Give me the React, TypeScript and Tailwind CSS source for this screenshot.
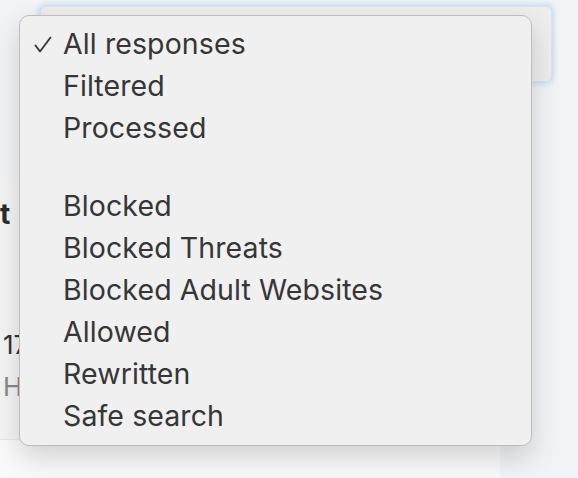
const groups: string[][] = [
  ['All responses', 'Filtered', 'Processed'],
  ['Blocked', 'Blocked Threats', 'Blocked Adult Websites', 'Allowed', 'Rewritten', 'Safe search'],
]

const selected = 'All responses'

function Check() {
  return (
    <svg className="absolute left-[14px] top-[13px] w-[18px] h-[18px]" viewBox="0 0 18 18" fill="none">
      <path d="M1.5 9.5 L6 15.5 L16.5 1.5" stroke="#3a3a3a" strokeWidth="1.9" strokeLinecap="round" strokeLinejoin="round" />
    </svg>
  )
}

function DropdownMenu() {
  return (
    <div className="absolute left-[19px] top-[15px] w-[513px] h-[431px] rounded-[10px] border border-[#bdbdbd] bg-[#f0f0f0] pt-[7px] pb-[8px] shadow-[0_12px_28px_rgba(0,0,0,0.16)]">
      {groups.map((group, gi) => (
        <div key={gi} className={gi > 0 ? 'pt-[36px]' : ''}>
          {group.map((label) => (
            <div
              key={label}
              className="relative h-[42px] pl-[43px] flex items-center text-[28.5px] text-[#363636] tracking-[0.1px] leading-none"
            >
              {label === selected && <Check />}
              {label}
            </div>
          ))}
        </div>
      ))}
    </div>
  )
}

export default function App() {
  return (
    <div className="relative w-[578px] h-[478px] overflow-hidden bg-[#f2f3f6] font-['Inter',sans-serif]">
      <div className="pt-[6px] pl-[40px]">
        <div className="w-[512px] h-[76px] rounded-[6px] bg-[#ededed] border border-[#d6e3f3] shadow-[0_0_5px_2px_rgba(160,195,240,0.5)]" />
      </div>

      <div className="mt-[96px] w-[500px] h-[300px] bg-[#fafafa]">
        <div className="h-[262px] bg-[#f4f4f4] border-b border-[#e8e8e8]">
          <div className="pt-[22px] pl-[0px] text-[28px] font-bold text-[#2b2b2b] leading-none">t</div>
          <div className="pt-[104px] pl-[3px] text-[26px] text-[#333] leading-none">17</div>
          <div className="pt-[16px] pl-[3px] text-[26px] text-[#8a8a8a] leading-none">H</div>
        </div>
      </div>

      <DropdownMenu />
    </div>
  )
}
